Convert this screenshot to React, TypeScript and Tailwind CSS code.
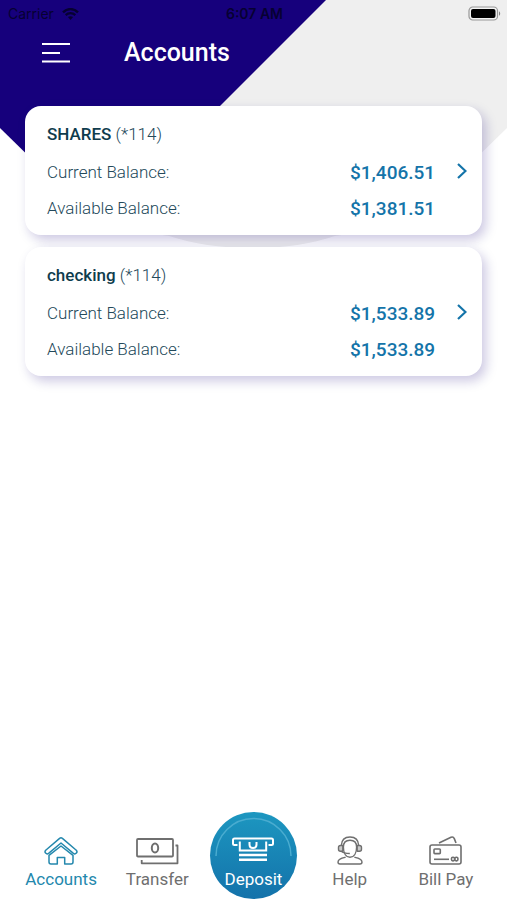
import type { ReactNode } from 'react'

interface Account {
  id: string
  name: string
  mask: string
  current: string
  available: string
}

const ACCOUNTS: Account[] = [
  { id: 'shares', name: 'SHARES', mask: '(*114)', current: '$1,406.51', available: '$1,381.51' },
  { id: 'checking', name: 'checking', mask: '(*114)', current: '$1,533.89', available: '$1,533.89' }
]

function Backdrop() {
  return (
    <svg viewBox="0 0 507 250" className="absolute inset-x-0 top-0 w-full" aria-hidden="true">
      <path d="M0 0H507V128L420 213C385 231 340 235 335 236C310 244 285 248 252 248S194 244 169 236C164 235 120 231 87 213L0 128Z" fill="#efefef" />
      <path d="M0 0H326L220 106L100 226L0 128Z" fill="#16007c" />
    </svg>
  )
}

function WifiIcon() {
  return (
    <svg viewBox="0 0 17 12" className="h-3 w-[17px]" fill="none" stroke="currentColor" aria-hidden="true">
      <path d="M1 4.3C5.2 0 11.8 0 16 4.3" strokeWidth="2.4" />
      <path d="M3.7 7.1C6.4 4.4 10.6 4.4 13.3 7.1" strokeWidth="2.2" />
      <path d="M8.5 11.9L5.9 9.1C7.4 7.8 9.6 7.8 11.1 9.1Z" fill="currentColor" stroke="none" />
    </svg>
  )
}

function BatteryIcon() {
  return (
    <svg viewBox="0 0 33 15" className="h-[15px] w-[33px]" aria-hidden="true">
      <rect x="1" y="1" width="28.5" height="13" rx="3.8" fill="#f4f4f4" stroke="#979797" strokeWidth="1.2" />
      <rect x="3" y="3" width="24.5" height="9" rx="2" fill="#000" />
      <path d="M31 5.2C32.6 6 32.6 9 31 9.8Z" fill="#858585" />
    </svg>
  )
}

function StatusBar() {
  return (
    <div className="grid h-[27px] grid-cols-3 items-center pr-1.5 pl-2 font-['Inter','Liberation_Sans',sans-serif] text-sm text-[#060032]">
      <div className="flex items-center gap-2">
        <span>Carrier</span>
        <WifiIcon />
      </div>
      <span className="text-center font-semibold">6:07 AM</span>
      <div className="flex justify-end">
        <BatteryIcon />
      </div>
    </div>
  )
}

function BalanceRow({ label, value }: { label: string; value: string }) {
  return (
    <div className="flex h-9 items-center justify-between">
      <dt className="text-[17px] font-light text-[#23495a]">{label}</dt>
      <dd className="w-[86px] text-[19px] font-medium whitespace-nowrap text-[#1474a9]">{value}</dd>
    </div>
  )
}

function AccountCard({ account }: { account: Account }) {
  return (
    <article className="rounded-2xl bg-white pt-4 pr-3 pb-2 pl-[22px] shadow-[4px_5px_12px_rgba(22,0,124,0.22)]">
      <h2 className="text-[17px] leading-6 font-light text-[#23495a]">
        <span className="font-medium text-[#0f3c4d]">{account.name}</span> {account.mask}
      </h2>
      <div className="mt-[9px] flex items-start">
        <dl className="flex-1">
          <BalanceRow label="Current Balance:" value={account.current} />
          <BalanceRow label="Available Balance:" value={account.available} />
        </dl>
        <button
          type="button"
          aria-label={`Open ${account.name}`}
          className="ml-[18px] flex h-8 w-4 items-center justify-center text-[#1474a9]"
        >
          <svg viewBox="0 0 10 16" className="h-4 w-[10px]" fill="none" stroke="currentColor" strokeWidth="2.2" aria-hidden="true">
            <path d="M1 1L8.5 8L1 15" />
          </svg>
        </button>
      </div>
    </article>
  )
}

function HomeIcon() {
  return (
    <svg viewBox="0 0 34 28" className="h-7 w-[34px]" fill="none" stroke="currentColor" strokeWidth="1.5" strokeLinejoin="round" aria-hidden="true">
      <path d="M15.6 1.4Q17 .3 18.4 1.4L32.3 13.2Q33.6 14.6 32.4 16.1Q31 17.6 29.4 16.4L17 6L4.6 16.4Q3 17.6 1.6 16.1Q.4 14.6 1.7 13.2Z" />
      <path d="M5 18.3V25Q5 27 7 27H13.3V20.5H20.7V27H27Q29 27 29 25V18.3L17 9Z" />
    </svg>
  )
}

function TransferIcon() {
  return (
    <svg viewBox="0 0 43 28" className="h-7 w-[43px]" fill="none" stroke="currentColor" strokeWidth="1.8" strokeLinejoin="round" aria-hidden="true">
      <rect x="1" y="2" width="36" height="17.5" rx="1" />
      <ellipse cx="19" cy="11" rx="3.2" ry="4.6" strokeWidth="2" />
      <path d="M39.5 8.5H41.5V26.3H5.7V23" />
    </svg>
  )
}

function DepositIcon() {
  return (
    <svg viewBox="0 0 42 26" className="h-[26px] w-[42px]" fill="none" stroke="currentColor" strokeWidth="2" aria-hidden="true">
      <path d="M5.5 8H2.5Q1 8 1 6.5V3Q1 1.5 2.5 1.5H39.5Q41 1.5 41 3V6.5Q41 8 39.5 8H36.5" />
      <path d="M7.8 4.5V13.5H34.2V4.5" />
      <path d="M17.5 5V7.5Q17.5 11 21 11T24.5 7.5V5" />
      <path d="M7 18H35M7 22.8H35" strokeWidth="2.6" />
    </svg>
  )
}

function HelpIcon() {
  return (
    <svg viewBox="0 0 26 29" className="h-[29px] w-[26px]" fill="none" stroke="currentColor" strokeWidth="1.4" strokeLinejoin="round" aria-hidden="true">
      <path d="M4.3 9.5C4.6 4 8 1 13 1S21.4 4 21.7 9.5" />
      <path d="M6.4 11C6.4 6.5 9 4.3 13 4.3S19.6 6.5 19.6 11C19.6 17.5 16.8 21.3 13 21.3S6.4 17.5 6.4 11Z" />
      <path
        d="M5.8 9.5H3.5Q1.5 9.5 1.5 11.5V13.3Q1.5 15.3 3.5 15.3H5.8ZM20.2 9.5H22.5Q24.5 9.5 24.5 11.5V13.3Q24.5 15.3 22.5 15.3H20.2Z"
        fill="#c9c9c9"
      />
      <path d="M4.2 15.3C6 17 8.5 17.5 12.8 17.5" />
      <path d="M8.6 21.3C4.5 22.3 1 23 1 26Q1 28 3 28H23Q25 28 25 26C25 23 21.5 22.3 17.4 21.3" />
    </svg>
  )
}

function BillPayIcon() {
  return (
    <svg viewBox="0 0 33 29" className="h-[29px] w-[33px]" fill="none" stroke="currentColor" strokeWidth="1.6" strokeLinejoin="round" aria-hidden="true">
      <path d="M10 7L22 1.3Q24.3.4 25.3 2.6L27 7" />
      <rect x="1" y="9" width="31" height="19" rx="2" />
      <rect x="5" y="13" width="6.3" height="4.6" rx=".8" />
      <path d="M5 23.3H20" />
      <rect x="22.5" y="21.3" width="3" height="3.6" rx="1.3" />
      <rect x="25.9" y="21.3" width="3" height="3.6" rx="1.3" />
    </svg>
  )
}

function NavItem({ label, active, children }: { label: string; active?: boolean; children: ReactNode }) {
  return (
    <a
      href="#"
      aria-current={active ? 'page' : undefined}
      className={`flex flex-col items-center justify-end pb-[9px] ${active ? 'text-[#2488ad]' : 'text-[#6f6f6f]'}`}
    >
      {children}
      <span className="mt-0.5 text-[17px] leading-6 whitespace-nowrap">{label}</span>
    </a>
  )
}

function DepositButton() {
  return (
    <a
      href="#"
      className="relative mb-px flex size-[87px] flex-col items-center justify-end justify-self-center rounded-full bg-linear-to-b from-[#1d97c0] to-[#1472aa] pb-2 text-white"
    >
      {/* light rim along the upper half */}
      <svg viewBox="0 0 87 87" className="absolute inset-0" fill="none" aria-hidden="true">
        <path d="M6 44A37.5 37.5 0 0 1 81 44" stroke="#4aacd0" strokeWidth="1.5" />
      </svg>
      <DepositIcon />
      <span className="mt-1 text-[17px] leading-6">Deposit</span>
    </a>
  )
}

export default function App() {
  return (
    <div className="relative flex min-h-screen flex-col bg-white font-['Roboto','Liberation_Sans',sans-serif]">
      <Backdrop />
      <div className="relative flex flex-1 flex-col">
        <StatusBar />
        <header className="flex h-[51px] items-center pl-[42px] text-white">
          <button type="button" aria-label="Menu">
            <svg viewBox="0 0 28 20" className="h-5 w-7" fill="none" stroke="currentColor" strokeWidth="2" aria-hidden="true">
              <path d="M0 1H28M0 10H18M0 18.5H28" />
            </svg>
          </button>
          <h1 className="ml-[54px] text-[25px] font-medium">Accounts</h1>
        </header>
        <main className="flex flex-1 flex-col gap-3 px-[25px] pt-7">
          {ACCOUNTS.map(account => (
            <AccountCard key={account.id} account={account} />
          ))}
        </main>
        <nav className="grid grid-cols-5 px-[13px]">
          <NavItem label="Accounts" active>
            <HomeIcon />
          </NavItem>
          <NavItem label="Transfer">
            <TransferIcon />
          </NavItem>
          <DepositButton />
          <NavItem label="Help">
            <HelpIcon />
          </NavItem>
          <NavItem label="Bill Pay">
            <BillPayIcon />
          </NavItem>
        </nav>
      </div>
    </div>
  )
}
